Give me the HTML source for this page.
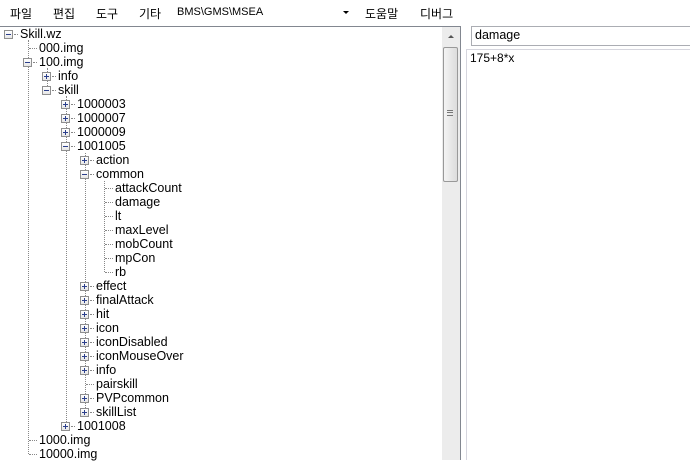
<!DOCTYPE html><html><head><meta charset="utf-8"><style>
*{margin:0;padding:0;box-sizing:border-box}
body{width:690px;height:460px;overflow:hidden;background:#fff;position:relative;font-family:"Liberation Sans","Noto Sans CJK KR",sans-serif;font-size:12.5px;color:#000}
.a{position:absolute;white-space:nowrap}
.m{top:5px;font-size:12px}
.t{position:absolute;line-height:14px;height:14px;white-space:nowrap}
.v{position:absolute;width:0;border-left:1px dotted #888}
.h{position:absolute;height:0;border-top:1px dotted #888}
.b{position:absolute;width:9px;height:9px;border:1px solid #8f8f8f;background:linear-gradient(#fff,#e6e6e6)}
.b:before{content:"";position:absolute;left:1px;top:3px;width:5px;height:1px;background:#2b3f8c}
.p:after{content:"";position:absolute;left:3px;top:1px;width:1px;height:5px;background:#2b3f8c}
</style></head><body>
<div class="a m" style="left:10px">파일</div>
<div class="a m" style="left:53px">편집</div>
<div class="a m" style="left:96px">도구</div>
<div class="a m" style="left:139px">기타</div>
<div class="a m" style="left:177px;font-size:11px;top:6px">BMS\GMS\MSEA</div>
<div class="a" style="left:343px;top:11px;width:0;height:0;border-left:3px solid transparent;border-right:3px solid transparent;border-top:3px solid #000"></div>
<div class="a m" style="left:365px">도움말</div>
<div class="a m" style="left:420px">디버그</div>
<div class="a" style="left:0;top:26px;width:461px;height:434px;border-top:1px solid #828790;border-right:1px solid #828790"></div>
<div class="a" style="left:442px;top:27px;width:18px;height:433px;background:#ececec"></div>
<div class="a" style="left:448px;top:35px;width:0;height:0;border-left:3px solid transparent;border-right:3px solid transparent;border-bottom:3px solid #555"></div>
<div class="a" style="left:443px;top:47px;width:15px;height:135px;border:1px solid #999;border-radius:2px;background:linear-gradient(90deg,#f4f4f4,#dcdcdc)"></div>
<div class="a" style="left:447px;top:110px;width:6px;height:6px;border-top:1px solid #777;border-bottom:1px solid #777"></div>
<div class="a" style="left:447px;top:112px;width:6px;height:1px;background:#777"></div>
<div class="a" style="left:471px;top:26px;width:219px;height:20px;border:1px solid #abadb3;border-right:none;padding:0 3px;line-height:17px">damage</div>
<div class="a" style="left:466px;top:49px;width:224px;height:411px;border-left:1px solid #d6d6de;border-top:1px solid #d6d6de;padding:1px 3px;line-height:14px;font-size:12px">175+8*x</div>
<div class="v" style="left:28px;top:40px;height:414px"></div>
<div class="v" style="left:47px;top:68px;height:22px"></div>
<div class="v" style="left:66px;top:96px;height:330px"></div>
<div class="v" style="left:85px;top:153px;height:259px"></div>
<div class="v" style="left:104px;top:181px;height:91px"></div>
<div id="tree"></div>
<div class="b" style="left:4px;top:30px"></div><div class="h" style="left:14px;top:34px;width:4px"></div><div class="t" style="left:20px;top:27px">Skill.wz</div>
<div class="h" style="left:29px;top:48px;width:8px"></div><div class="t" style="left:39px;top:41px">000.img</div>
<div class="b" style="left:23px;top:58px"></div><div class="h" style="left:33px;top:62px;width:4px"></div><div class="t" style="left:39px;top:55px">100.img</div>
<div class="b p" style="left:42px;top:72px"></div><div class="h" style="left:52px;top:76px;width:4px"></div><div class="t" style="left:58px;top:69px">info</div>
<div class="b" style="left:42px;top:86px"></div><div class="h" style="left:52px;top:90px;width:4px"></div><div class="t" style="left:58px;top:83px">skill</div>
<div class="b p" style="left:61px;top:100px"></div><div class="h" style="left:71px;top:104px;width:4px"></div><div class="t" style="left:77px;top:97px">1000003</div>
<div class="b p" style="left:61px;top:114px"></div><div class="h" style="left:71px;top:118px;width:4px"></div><div class="t" style="left:77px;top:111px">1000007</div>
<div class="b p" style="left:61px;top:128px"></div><div class="h" style="left:71px;top:132px;width:4px"></div><div class="t" style="left:77px;top:125px">1000009</div>
<div class="b" style="left:61px;top:142px"></div><div class="h" style="left:71px;top:146px;width:4px"></div><div class="t" style="left:77px;top:139px">1001005</div>
<div class="b p" style="left:80px;top:156px"></div><div class="h" style="left:90px;top:160px;width:4px"></div><div class="t" style="left:96px;top:153px">action</div>
<div class="b" style="left:80px;top:170px"></div><div class="h" style="left:90px;top:174px;width:4px"></div><div class="t" style="left:96px;top:167px">common</div>
<div class="h" style="left:105px;top:188px;width:8px"></div><div class="t" style="left:115px;top:181px">attackCount</div>
<div class="h" style="left:105px;top:202px;width:8px"></div><div class="t" style="left:115px;top:195px">damage</div>
<div class="h" style="left:105px;top:216px;width:8px"></div><div class="t" style="left:115px;top:209px">lt</div>
<div class="h" style="left:105px;top:230px;width:8px"></div><div class="t" style="left:115px;top:223px">maxLevel</div>
<div class="h" style="left:105px;top:244px;width:8px"></div><div class="t" style="left:115px;top:237px">mobCount</div>
<div class="h" style="left:105px;top:258px;width:8px"></div><div class="t" style="left:115px;top:251px">mpCon</div>
<div class="h" style="left:105px;top:272px;width:8px"></div><div class="t" style="left:115px;top:265px">rb</div>
<div class="b p" style="left:80px;top:282px"></div><div class="h" style="left:90px;top:286px;width:4px"></div><div class="t" style="left:96px;top:279px">effect</div>
<div class="b p" style="left:80px;top:296px"></div><div class="h" style="left:90px;top:300px;width:4px"></div><div class="t" style="left:96px;top:293px">finalAttack</div>
<div class="b p" style="left:80px;top:310px"></div><div class="h" style="left:90px;top:314px;width:4px"></div><div class="t" style="left:96px;top:307px">hit</div>
<div class="b p" style="left:80px;top:324px"></div><div class="h" style="left:90px;top:328px;width:4px"></div><div class="t" style="left:96px;top:321px">icon</div>
<div class="b p" style="left:80px;top:338px"></div><div class="h" style="left:90px;top:342px;width:4px"></div><div class="t" style="left:96px;top:335px">iconDisabled</div>
<div class="b p" style="left:80px;top:352px"></div><div class="h" style="left:90px;top:356px;width:4px"></div><div class="t" style="left:96px;top:349px">iconMouseOver</div>
<div class="b p" style="left:80px;top:366px"></div><div class="h" style="left:90px;top:370px;width:4px"></div><div class="t" style="left:96px;top:363px">info</div>
<div class="h" style="left:86px;top:384px;width:8px"></div><div class="t" style="left:96px;top:377px">pairskill</div>
<div class="b p" style="left:80px;top:394px"></div><div class="h" style="left:90px;top:398px;width:4px"></div><div class="t" style="left:96px;top:391px">PVPcommon</div>
<div class="b p" style="left:80px;top:408px"></div><div class="h" style="left:90px;top:412px;width:4px"></div><div class="t" style="left:96px;top:405px">skillList</div>
<div class="b p" style="left:61px;top:422px"></div><div class="h" style="left:71px;top:426px;width:4px"></div><div class="t" style="left:77px;top:419px">1001008</div>
<div class="h" style="left:29px;top:440px;width:8px"></div><div class="t" style="left:39px;top:433px">1000.img</div>
<div class="h" style="left:29px;top:454px;width:8px"></div><div class="t" style="left:39px;top:447px">10000.img</div>
</body></html>
